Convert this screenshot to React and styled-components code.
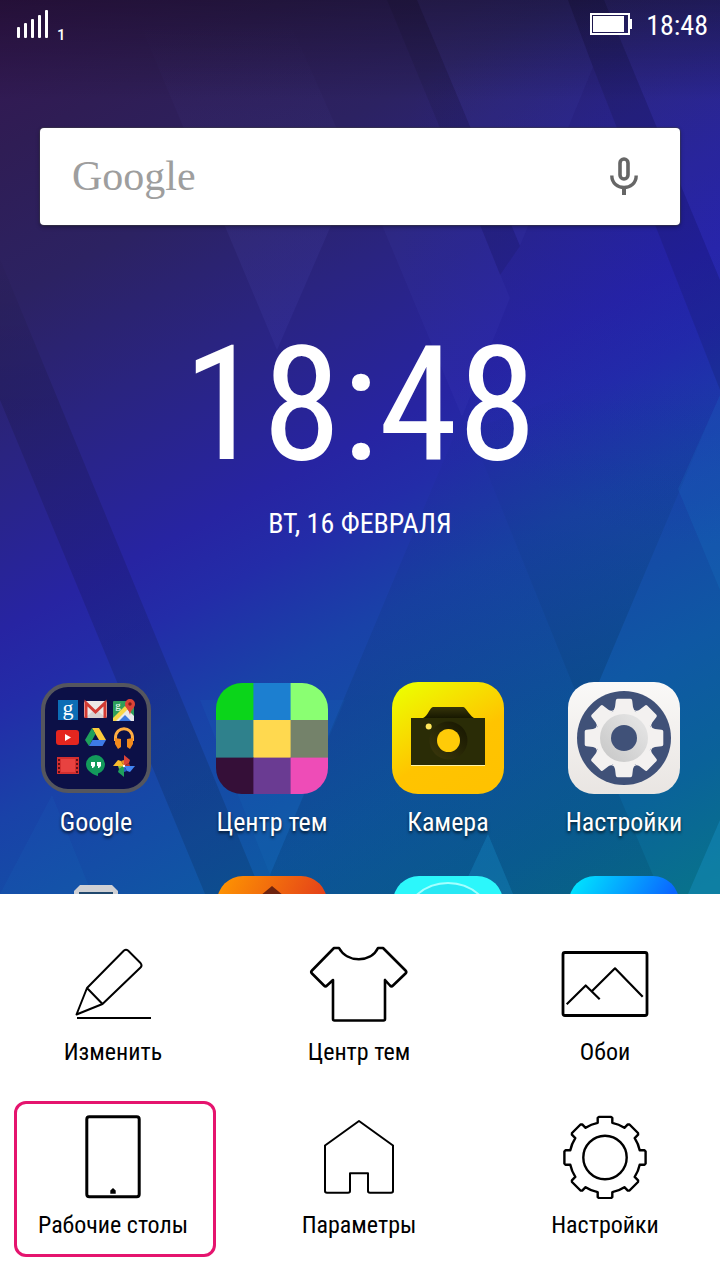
import React from "react";
import styled, { createGlobalStyle } from "styled-components";

const GlobalStyle = createGlobalStyle`
  *, *::before, *::after { box-sizing: border-box; }
  body { margin: 0; background: #fff; }
  button { font: inherit; color: inherit; background: none; border: 0; padding: 0; cursor: pointer; }
`;

const Screen = styled.div`
  display: flex;
  flex-direction: column;
  height: 100vh;
  overflow: hidden;
  font-family: "Roboto Condensed", Roboto, sans-serif;
`;

const Home = styled.main`
  flex: 1;
  min-height: 0;
  overflow: hidden;
  display: grid;
  grid-template: minmax(0, 1fr) / minmax(0, 1fr);
  color: #fff;
`;

const WallpaperArt = styled.svg`
  grid-area: 1 / 1;
  width: 100%;
  height: 100%;
`;

const HomeContent = styled.div`
  grid-area: 1 / 1;
  min-width: 0;
`;

const StatusBar = styled.header`
  display: flex;
  align-items: center;
  justify-content: space-between;
  height: 48px;
  padding: 0 12px 0 16px;
`;

const StatusGroup = styled.div`
  display: flex;
  align-items: center;
  gap: ${(p) => p.$gap}px;
`;

const SimNumber = styled.span`
  align-self: flex-end;
  font-family: Roboto, sans-serif;
  font-size: 15px;
  line-height: 8px;
  font-weight: 500;
`;

const StatusTime = styled.time`
  font-size: 28px;
  line-height: 32px;
  padding-top: 4px;
`;

const SearchBar = styled.form`
  display: flex;
  align-items: center;
  height: 97px;
  margin: 80px 40px 0;
  padding: 0 32px 2px;
  background: #fff;
  border-radius: 4px;
  box-shadow: 0 0 1px 1px rgba(60, 60, 70, 0.6), 0 2px 4px rgba(0, 0, 0, 0.35);
`;

const SearchLogo = styled.label`
  font-family: "Liberation Serif", serif;
  font-size: 42px;
  line-height: 48px;
  color: #9e9e9e;
`;

const SearchInput = styled.input`
  flex: 1;
  min-width: 0;
  border: 0;
  outline: 0;
  background: transparent;
  font-size: 28px;
`;

const MicButton = styled.button`
  display: flex;
  width: 48px;
  height: 48px;
  align-items: center;
  justify-content: center;
`;

const ClockWidget = styled.section`
  display: flex;
  flex-direction: column;
  align-items: center;
  margin-top: 100px;
`;

const ClockTime = styled.time`
  font-size: 160px;
  line-height: 160px;
`;

const ClockDate = styled.span`
  margin-top: 23px;
  font-size: 28px;
  line-height: 32px;
`;

const AppGrid = styled.div`
  display: grid;
  grid-template-columns: repeat(4, 1fr);
  row-gap: 38px;
  margin-top: 142px;
  padding: 0 8px;
`;

const AppButton = styled.button`
  display: flex;
  flex-direction: column;
  align-items: center;
  gap: 12px;
  height: 156px;
`;

const AppLabel = styled.span`
  font-size: 26px;
  line-height: 32px;
  white-space: nowrap;
  text-shadow: 0 2px 3px rgba(0, 0, 0, 0.7);
`;

const Sheet = styled.nav`
  display: grid;
  grid-template-columns: repeat(3, 202px);
  justify-content: space-between;
  row-gap: 17px;
  padding: 34px 12px 23px 14px;
  background: #fff;
  color: #000;
`;

const SheetButton = styled.button`
  display: flex;
  flex-direction: column;
  align-items: center;
  gap: 11px;
  height: 156px;
  padding: 11px 4px 0 0;
  border: 3px solid ${(p) => (p.$active ? "#e5146e" : "transparent")};
  border-radius: 12px;
`;

const SheetLabel = styled.span`
  font-size: 24px;
  line-height: 30px;
  white-space: nowrap;
`;

function Wallpaper() {
  return (
    <WallpaperArt viewBox="0 0 720 894" preserveAspectRatio="none" aria-hidden="true">
      <defs>
        <linearGradient id="sky" gradientUnits="userSpaceOnUse" x1="0" y1="0" x2="525" y2="982">
          <stop offset="0" stopColor="#34164f" />
          <stop offset="0.12" stopColor="#2f1d55" />
          <stop offset="0.24" stopColor="#2c2262" />
          <stop offset="0.36" stopColor="#2a2480" />
          <stop offset="0.5" stopColor="#2724a2" />
          <stop offset="0.56" stopColor="#232ca8" />
          <stop offset="0.65" stopColor="#1942a8" />
          <stop offset="0.8" stopColor="#0f58a4" />
          <stop offset="0.9" stopColor="#0a629a" />
          <stop offset="1" stopColor="#08728c" />
        </linearGradient>
        <linearGradient id="shade" x1="0" y1="0" x2="0" y2="1">
          <stop offset="0" stopColor="#000" stopOpacity="0.3" />
          <stop offset="1" stopColor="#000" stopOpacity="0" />
        </linearGradient>
        <radialGradient id="blueGlow" gradientUnits="userSpaceOnUse" cx="720" cy="220" r="330">
          <stop offset="0" stopColor="#1c1cb4" stopOpacity="0.3" />
          <stop offset="1" stopColor="#1c1cb4" stopOpacity="0" />
        </radialGradient>
        <linearGradient id="deepen" gradientUnits="userSpaceOnUse" x1="0" y1="380" x2="0" y2="700">
          <stop offset="0" stopColor="#00203c" stopOpacity="0" />
          <stop offset="1" stopColor="#00203c" stopOpacity="0.22" />
        </linearGradient>
        <linearGradient id="fadeDown" gradientUnits="userSpaceOnUse" x1="0" y1="230" x2="0" y2="400">
          <stop offset="0" stopColor="#000" stopOpacity="0" />
          <stop offset="1" stopColor="#000" stopOpacity="0.13" />
        </linearGradient>
        <linearGradient id="fadeLight" gradientUnits="userSpaceOnUse" x1="0" y1="20" x2="0" y2="240">
          <stop offset="0" stopColor="#7878ff" stopOpacity="0" />
          <stop offset="1" stopColor="#7878ff" stopOpacity="0.07" />
        </linearGradient>
      </defs>
      <rect width="720" height="894" fill="url(#sky)" />
      <rect width="720" height="894" fill="url(#blueGlow)" />
      <path d="M0 259V400L205 894H262Z" fill="url(#fadeDown)" />
      <path d="M462 417L270 875L278 894H661L585 715L470 430Z" fill="url(#deepen)" opacity="0.55" />
      <path d="M470 430L585 715L720 395V340Z" fill="url(#deepen)" />
      <g fill="#000">
        <path d="M387 0H417L520 246L500 275L481 227Z" opacity="0.08" />
        <path d="M568 0H604L720 280V390L593 67Z" opacity="0.1" />
      </g>
      <path d="M130 0H280L355 170L277 350Z" fill="url(#fadeLight)" />
      <g fill="#7878ff">
        <path d="M417 0H568L593 67L520 246Z" opacity="0.05" />
        <path d="M604 0H720V280Z" opacity="0.04" />
        <path d="M382 225H480L510 298L462 417Z" opacity="0.05" />
      </g>
      <g fill="#20a8e8">
        <path d="M720 395L678 489L720 590Z" opacity="0.1" />
        <path d="M488 834L460 894H513Z" opacity="0.22" />
        <path d="M200 700H345L270 875Z" opacity="0.06" />
        <path d="M720 820L688 894H720Z" opacity="0.25" />
        <path d="M52 795L0 894H92Z" opacity="0.05" />
      </g>
      <rect width="720" height="100" fill="url(#shade)" />
    </WallpaperArt>
  );
}

function SignalIcon() {
  return (
    <svg width="34" height="30" viewBox="0 0 34 30" fill="#fff" aria-hidden="true">
      <rect x="1" y="18" width="3" height="11" rx="1" />
      <rect x="8" y="14" width="3" height="15" rx="1" />
      <rect x="15" y="10" width="3" height="19" rx="1" />
      <rect x="22" y="6" width="3" height="23" rx="1" />
      <rect x="29" y="1" width="3" height="28" rx="1" />
    </svg>
  );
}

function BatteryIcon() {
  return (
    <svg width="42" height="22" viewBox="0 0 42 22" aria-hidden="true">
      <rect x="1" y="1" width="38" height="20" fill="none" stroke="#fff" strokeWidth="2" />
      <rect x="3" y="3" width="31" height="16" fill="#fff" />
      <rect x="40" y="6" width="2" height="10" fill="#fff" />
    </svg>
  );
}

function MicIcon() {
  return (
    <svg width="30" height="40" viewBox="0 0 30 40" fill="none" stroke="#666" strokeWidth="4" aria-hidden="true">
      <rect x="11" y="3" width="8" height="20" rx="4" strokeWidth="3.6" />
      <path d="M2.8 19.5C2.8 35.5 27.2 35.5 27.2 19.5" strokeWidth="3.4" />
      <path d="M15 31V39" />
    </svg>
  );
}

function GoogleFolderIcon() {
  return (
    <svg width="112" height="112" viewBox="0 0 112 112" aria-hidden="true">
      <rect x="3" y="3" width="106" height="106" rx="25" fill="#0c1047" stroke="#55565e" strokeWidth="4" />
      <g transform="translate(18 18)">
        <rect width="20" height="20" fill="#0c6db5" />
        <text x="10" y="15" textAnchor="middle" fontFamily="Liberation Serif" fontSize="22" fill="#fff">g</text>
      </g>
      <g transform="translate(44 19)">
        <rect width="23" height="17" rx="2" fill="#ece8e6" />
        <path d="M1 17L11.500 8L22 17Z" fill="#d8d2d0" />
        <path d="M2 17V2L11.500 11L21 2V17" fill="none" stroke="#d33b33" strokeWidth="3" />
      </g>
      <g transform="translate(73 17)">
        <rect y="2" width="21" height="20" rx="1" fill="#2f9e5a" />
        <path d="M0 22L13 9L21 17V22Z" fill="#e8e8ea" />
        <path d="M0 19L12 7L15 10L3 22H0Z" fill="#f9d648" />
        <path d="M6 22L12 16L18 22Z" fill="#3b78e0" />
        <text x="5" y="10" textAnchor="middle" fontFamily="Liberation Serif" fontSize="11" fill="#fff">g</text>
        <path d="M17 16C16 10 12 9 12 5A5 5 0 0 1 22 5C22 9 18 10 17 16Z" fill="#dc4437" />
        <circle cx="17" cy="5" r="1.700" fill="#7a1c18" />
      </g>
      <rect x="16" y="48" width="23" height="15" rx="3" fill="#e4261f" />
      <path d="M25 52V59L31 55.500Z" fill="#fff" />
      <g transform="translate(45 46)">
        <path d="M7 0H14L21 12H14Z" fill="#fbcb3c" />
        <path d="M7 0L10.500 6L4 18L0 12Z" fill="#1fa05b" />
        <path d="M7.500 12H21L17.500 18H4Z" fill="#3e7be6" />
      </g>
      <g transform="translate(73 45)">
        <path d="M2.500 14V11C2.500 -1.500 19.500 -1.500 19.500 11V14" fill="none" stroke="#ffad42" strokeWidth="3" />
        <path d="M2 11L8 12V20L5 22L2 17ZM20 11L14 12V20L17 22L20 17Z" fill="#f28a1c" />
      </g>
      <g transform="translate(17 75)">
        <rect width="22" height="17" fill="#d32f2f" />
        <rect x="4" y="2" width="14" height="13" fill="#e84240" />
        <path d="M2 2V16M20 2V16" stroke="#5c1018" strokeWidth="2" strokeDasharray="2 2" />
      </g>
      <g transform="translate(46 73)">
        <path d="M10 0A10 9.500 0 0 1 12 18.500V21C8 20 0 16 0 9.500A10 9.500 0 0 1 10 0Z" fill="#139a5b" />
        <path d="M5 7H9V11L7 13H6V11H5ZM11 7H15V11L13 13H12V11H11Z" fill="#fff" />
      </g>
      <g transform="translate(84 84)">
        <path d="M0 0V-11L6 -6L5 -3Z" fill="#dc4437" />
        <path d="M0 0H11L6 6L3 5Z" fill="#4285f4" />
        <path d="M0 0V11L-6 6L-5 3Z" fill="#1fa05b" />
        <path d="M0 0H-11L-6 -6L-3 -5Z" fill="#fbbc2c" />
        <path d="M0 0L5 -3L6 0Z" fill="#b9342c" />
        <path d="M0 0L3 5L0 6Z" fill="#2a5fc4" />
        <path d="M0 0L-5 3L-6 0Z" fill="#88c540" />
        <path d="M0 0L-3 -5L0 -6Z" fill="#e88a22" />
        <circle r="1.200" fill="#fff" />
      </g>
    </svg>
  );
}

const themeColors = [
  ["#0bd51a", "#1c7fd0", "#8aff72"],
  ["#2f818c", "#ffd94f", "#74826a"],
  ["#350f38", "#6a3b92", "#ee4cb7"],
];

function ThemesAppIcon() {
  return (
    <svg width="112" height="112" viewBox="0 0 112 112" aria-hidden="true">
      <clipPath id="themesClip"><rect y="1" width="112" height="111" rx="26" /></clipPath>
      <g clipPath="url(#themesClip)">
        {themeColors.map((row, r) =>
          row.map((color, c) => (
            <rect key={color} x={[0, 37.4, 74.6][c]} y={[0, 38, 75.6][r]} width="38" height="38" fill={color} />
          ))
        )}
      </g>
    </svg>
  );
}

function CameraIcon() {
  return (
    <svg width="112" height="112" viewBox="0 0 112 112" aria-hidden="true">
      <defs>
        <linearGradient id="camBg" x1="0.1" y1="0" x2="0.7" y2="1">
          <stop offset="0" stopColor="#ecff00" />
          <stop offset="0.62" stopColor="#ffc400" />
          <stop offset="1" stopColor="#ffc200" />
        </linearGradient>
        <linearGradient id="camTop" x1="0" y1="0" x2="0" y2="1">
          <stop offset="0" stopColor="#36340a" />
          <stop offset="1" stopColor="#171800" />
        </linearGradient>
        <linearGradient id="lens" x1="0" y1="1" x2="1" y2="0">
          <stop offset="0" stopColor="#3c390c" />
          <stop offset="1" stopColor="#151500" />
        </linearGradient>
      </defs>
      <rect width="112" height="112" rx="26" fill="url(#camBg)" />
      <path d="M31 36C36 34 38 25 41 25H71C74 25 76 32 82 36Z" fill="url(#camTop)" />
      <path d="M19 83.500H93" stroke="#fff3a0" />
      <rect x="19" y="36" width="74" height="47" fill="#2a2c06" />
      <circle cx="56.500" cy="58.500" r="19" fill="url(#lens)" />
      <circle cx="56.500" cy="58.500" r="11.500" fill="#ffcb08" />
      <circle cx="36.700" cy="44.500" r="3" fill="#ffe75a" />
    </svg>
  );
}

const gearTeeth = [0, 45, 90, 135, 180, 225, 270, 315];

function SettingsAppIcon() {
  return (
    <svg width="112" height="112" viewBox="0 0 112 112" aria-hidden="true">
      <defs>
        <linearGradient id="setBg" x1="0" y1="0" x2="0" y2="1">
          <stop offset="0" stopColor="#faf9f8" />
          <stop offset="1" stopColor="#e9e5e2" />
        </linearGradient>
        <linearGradient id="setRing" x1="0" y1="1" x2="1" y2="0">
          <stop offset="0" stopColor="#c6c6c6" />
          <stop offset="1" stopColor="#e8e8e8" />
        </linearGradient>
      </defs>
      <rect width="112" height="112" rx="26" fill="url(#setBg)" />
      <circle cx="56" cy="56" r="47" fill="#405178" />
      <g fill="#f3f1f0" transform="translate(56 56)">
        <circle r="29" />
        {gearTeeth.map((a) => (
          <path key={a} transform={`rotate(${a})`} d="M-12 -27Q-9.500 -28 -9 -31L-8.200 -37.500Q-8 -39.300 -6.500 -39.300H6.500Q8 -39.300 8.200 -37.500L9 -31Q9.500 -28 12 -27Z" />
        ))}
      </g>
      <circle cx="56" cy="56" r="24" fill="url(#setRing)" />
      <circle cx="56" cy="56" r="13" fill="#405178" />
    </svg>
  );
}

function DeviceAppIcon() {
  return (
    <svg width="112" height="112" viewBox="0 0 112 112" aria-hidden="true">
      <path d="M34 112V15L40 9H72L78 15V112Z" fill="#cfd0d4" />
      <path d="M41 112V17H71V112Z" fill="#e5e8ee" />
      <path d="M40 112V17H72V112" fill="none" stroke="#20486e" strokeWidth="2" />
    </svg>
  );
}

function OrangeAppIcon() {
  return (
    <svg width="112" height="112" viewBox="0 0 112 112" aria-hidden="true">
      <defs>
        <linearGradient id="orange" x1="0" y1="0" x2="1" y2="0.5">
          <stop offset="0" stopColor="#ff9800" />
          <stop offset="1" stopColor="#e0321e" />
        </linearGradient>
      </defs>
      <rect x="1" width="110" height="112" rx="26" fill="url(#orange)" />
      <path d="M56 10L20 40H92Z" fill="#6e2410" />
    </svg>
  );
}

function CyanAppIcon() {
  return (
    <svg width="112" height="112" viewBox="0 0 112 112" aria-hidden="true">
      <rect x="1" width="110" height="112" rx="26" fill="#2cf7fb" />
      <circle cx="56" cy="54" r="47" fill="#28e8f4" stroke="#a4ffff" strokeWidth="2" />
    </svg>
  );
}

function BlueAppIcon() {
  return (
    <svg width="112" height="112" viewBox="0 0 112 112" aria-hidden="true">
      <defs>
        <linearGradient id="azure" x1="0.1" y1="0" x2="0.8" y2="0.4">
          <stop offset="0" stopColor="#00e0ff" />
          <stop offset="1" stopColor="#0a66ff" />
        </linearGradient>
      </defs>
      <rect x="1" width="110" height="112" rx="26" fill="url(#azure)" />
    </svg>
  );
}

function LineIcon({ weight, children }) {
  return (
    <svg
      width="104"
      height="84"
      viewBox="0 0 104 84"
      fill="none"
      stroke="#000"
      strokeWidth={weight}
      strokeLinejoin="round"
      aria-hidden="true"
    >
      {children}
    </svg>
  );
}

function gearOutline(cx, cy) {
  const point = (angle, radial, lateral) => {
    const a = (angle * Math.PI) / 180;
    const x = cx + radial * Math.sin(a) + lateral * Math.cos(a);
    const y = cy - radial * Math.cos(a) + lateral * Math.sin(a);
    return `${x.toFixed(1)} ${y.toFixed(1)}`;
  };
  return (
    gearTeeth
      .map((a, i) => {
        const start = i === 0 ? "M" : "A35.5 35.5 0 0 1 ";
        return `${start}${point(a, 34.7, -7.3)}L${point(a, 39.5, -7.3)}L${point(a, 40.6, -6)}L${point(a, 40.6, 6)}L${point(a, 39.5, 7.3)}L${point(a, 34.7, 7.3)}`;
      })
      .join("") + `A35.5 35.5 0 0 1 ${point(0, 34.7, -7.3)}Z`
  );
}

const EditIcon = () => (
  <LineIcon weight="2">
    <path d="M26 46L63 8.500Q65 7 67 8.500L79.500 21Q81.500 23.500 79.500 25.500L41.500 62L15.500 72.500ZM26 46L41.500 62M16 76H90" />
  </LineIcon>
);
const ShirtIcon = () => (
  <LineIcon weight="2.6">
    <path d="M27 6H32C40 21 64 21 71 6H76L98.500 28.500Q100 30 98.500 31.500L86 43.500Q84.500 45 83 43.500L78 38V77Q78 78.500 76.500 78.500H27.500Q26 78.500 26 77V38L20 43.500Q18.500 45 17 43.500L5 31.500Q3.500 30 5 28.500Z" />
  </LineIcon>
);
const WallpaperIcon = () => (
  <LineIcon weight="2.8">
    <rect x="10" y="10.500" width="84" height="63" rx="2" />
    <path d="M13.700 62.300L32.700 43.500L46.700 57.300M39.300 48.700L62 26.300L89.700 54.700" strokeWidth="2.2" />
  </LineIcon>
);
const DesktopsIcon = () => (
  <LineIcon weight="3">
    <rect x="25.800" y="1.800" width="52.400" height="80" rx="2.500" />
    <path d="M52 73L54.700 75.500V78.700H49.300V75.500Z" fill="#000" stroke="none" />
  </LineIcon>
);
const HomeIcon = () => (
  <LineIcon weight="2">
    <path d="M52 6L18 30.500V76Q18 77.700 20 77.700H41Q43 77.700 43 76V58.300H61V76Q61 77.700 63 77.700H84Q86 77.700 86 76V30.500Z" />
  </LineIcon>
);
const GearIcon = () => (
  <LineIcon weight="2.4">
    <path d={gearOutline(52, 42.5)} />
    <circle cx="52" cy="42.500" r="21.700" />
  </LineIcon>
);

const apps = [
  { name: "Google", Icon: GoogleFolderIcon },
  { name: "Центр тем", Icon: ThemesAppIcon },
  { name: "Камера", Icon: CameraIcon },
  { name: "Настройки", Icon: SettingsAppIcon },
];

const nextRowApps = [
  { id: "device", Icon: DeviceAppIcon },
  { id: "orange", Icon: OrangeAppIcon },
  { id: "cyan", Icon: CyanAppIcon },
  { id: "azure", Icon: BlueAppIcon },
];

const sheetItems = [
  { name: "Изменить", Icon: EditIcon },
  { name: "Центр тем", Icon: ShirtIcon },
  { name: "Обои", Icon: WallpaperIcon },
  { name: "Рабочие столы", Icon: DesktopsIcon, active: true },
  { name: "Параметры", Icon: HomeIcon },
  { name: "Настройки", Icon: GearIcon },
];

export default function App() {
  return (
    <Screen>
      <GlobalStyle />
      <Home>
        <Wallpaper />
        <HomeContent>
          <StatusBar>
            <StatusGroup $gap={7}>
              <SignalIcon />
              <SimNumber>1</SimNumber>
            </StatusGroup>
            <StatusGroup $gap={14}>
              <BatteryIcon />
              <StatusTime>18:48</StatusTime>
            </StatusGroup>
          </StatusBar>
          <SearchBar role="search" onSubmit={(e) => e.preventDefault()}>
            <SearchLogo htmlFor="query">Google</SearchLogo>
            <SearchInput id="query" type="text" />
            <MicButton type="button" aria-label="Голосовой поиск">
              <MicIcon />
            </MicButton>
          </SearchBar>
          <ClockWidget>
            <ClockTime>18:48</ClockTime>
            <ClockDate>ВТ, 16 ФЕВРАЛЯ</ClockDate>
          </ClockWidget>
          <AppGrid>
            {apps.map(({ name, Icon }) => (
              <AppButton key={name} type="button">
                <Icon />
                <AppLabel>{name}</AppLabel>
              </AppButton>
            ))}
            {nextRowApps.map(({ id, Icon }) => (
              <AppButton key={id} type="button" aria-label={id}>
                <Icon />
              </AppButton>
            ))}
          </AppGrid>
        </HomeContent>
      </Home>
      <Sheet>
        {sheetItems.map(({ name, Icon, active }) => (
          <SheetButton key={name} type="button" $active={active}>
            <Icon />
            <SheetLabel>{name}</SheetLabel>
          </SheetButton>
        ))}
      </Sheet>
    </Screen>
  );
}
